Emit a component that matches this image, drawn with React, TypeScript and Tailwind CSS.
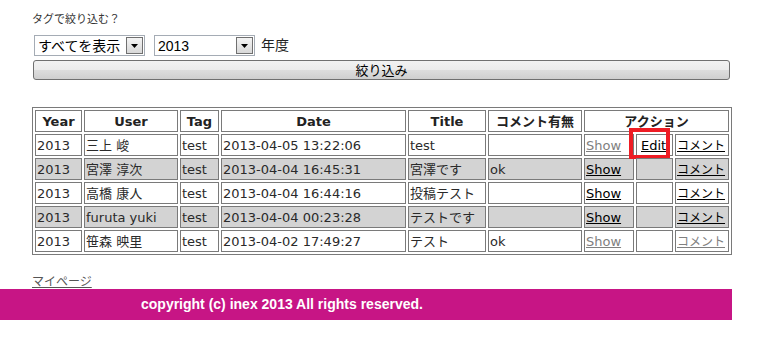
const rows = [
  { year: "2013", user: "三上 峻", tag: "test", date: "2013-04-05 13:22:06", title: "test", comment: "", showGrey: true, edit: true, cmtGrey: false },
  { year: "2013", user: "宮澤 淳次", tag: "test", date: "2013-04-04 16:45:31", title: "宮澤です", comment: "ok", showGrey: false, edit: false, cmtGrey: false },
  { year: "2013", user: "高橋 康人", tag: "test", date: "2013-04-04 16:44:16", title: "投稿テスト", comment: "", showGrey: false, edit: false, cmtGrey: false },
  { year: "2013", user: "furuta yuki", tag: "test", date: "2013-04-04 00:23:28", title: "テストです", comment: "", showGrey: false, edit: false, cmtGrey: false },
  { year: "2013", user: "笹森 映里", tag: "test", date: "2013-04-02 17:49:27", title: "テスト", comment: "ok", showGrey: true, edit: false, cmtGrey: true },
];

function FakeSelect({ value, width }: { value: string; width: string }) {
  return (
    <div className={`flex h-[21px] items-center justify-between border border-[#a5acb5] bg-white pl-[3px] pr-[1px] ${width}`}>
      <span className="text-[14px] leading-none text-black">{value}</span>
      <span className="flex h-[17px] w-[17px] items-center justify-center border border-[#707070] bg-gradient-to-b from-[#f4f4f4] to-[#d8d8d8]">
        <svg width="7" height="4" viewBox="0 0 7 4">
          <path d="M0 0h7L3.5 4z" fill="#000" />
        </svg>
      </span>
    </div>
  );
}

export default function App() {
  const cell = "h-[22px] border border-[#7a7a7a] px-[1px] align-middle whitespace-nowrap overflow-visible";
  return (
    <div className="relative min-h-[347px] w-[773px] bg-white font-['Liberation_Sans','Noto_Sans_CJK_JP',sans-serif] text-[#222]">
      <div className="ml-[32px] w-[700px] pt-[10px]">
        <p className="text-[11px] leading-[18px] text-[#333]">タグで絞り込む？</p>

        <div className="mt-[7px] flex items-center">
          <div className="ml-[2px]">
            <FakeSelect value="すべてを表示" width="w-[111px]" />
          </div>
          <div className="ml-[9px]">
            <FakeSelect value="2013" width="w-[101px]" />
          </div>
          <span className="ml-[6px] text-[14px] text-[#222]">年度</span>
        </div>

        <button
          type="button"
          className="mt-[4px] ml-[1px] flex h-[20px] w-[697px] items-center justify-center rounded-[3px] border border-[#707070] bg-[linear-gradient(to_bottom,#f2f2f2_0%,#ebebeb_50%,#dddddd_51%,#cfcfcf_100%)] text-[13px] leading-none text-black"
        >
          絞り込み
        </button>

        <table className="mt-[27px] w-[700px] table-fixed border-separate border-spacing-[2px] border border-[#7a7a7a] font-['DejaVu_Sans','Noto_Sans_CJK_JP',sans-serif] text-[13px] leading-none">
          <colgroup>
            <col className="w-[47px]" />
            <col className="w-[94px]" />
            <col className="w-[39px]" />
            <col className="w-[185px]" />
            <col className="w-[78px]" />
            <col className="w-[94px]" />
            <col className="w-[50px]" />
            <col className="w-[37px]" />
            <col className="w-[54px]" />
          </colgroup>
          <thead>
            <tr className="font-bold text-[#222]">
              <th className={`${cell} text-center`}>Year</th>
              <th className={`${cell} text-center`}>User</th>
              <th className={`${cell} text-center`}>Tag</th>
              <th className={`${cell} text-center`}>Date</th>
              <th className={`${cell} text-center`}>Title</th>
              <th className={`${cell} text-center`}>コメント有無</th>
              <th colSpan={3} className={`${cell} text-center`}>アクション</th>
            </tr>
          </thead>
          <tbody>
            {rows.map((r, i) => {
              const bg = i % 2 === 1 ? "bg-[#d3d3d3]" : "bg-white";
              return (
                <tr key={i} className="text-[#2a2a2a]">
                  <td className={`${cell} ${bg}`}>{r.year}</td>
                  <td className={`${cell} ${bg}`}>{r.user}</td>
                  <td className={`${cell} ${bg}`}>{r.tag}</td>
                  <td className={`${cell} ${bg}`}>{r.date}</td>
                  <td className={`${cell} ${bg}`}>{r.title}</td>
                  <td className={`${cell} ${bg}`}>{r.comment}</td>
                  <td className={`${cell} ${bg}`}>
                    <a href="#" className={`underline ${r.showGrey ? "text-[#808080]" : "text-black"}`}>
                      Show
                    </a>
                  </td>
                  <td className={`${cell} ${bg} relative`}>
                    {r.edit && (
                      <>
                        <a href="#" className="ml-[3px] text-black underline">
                          Edit
                        </a>
                        <span className="pointer-events-none absolute left-[-8px] top-[-7px] h-[31px] w-[41px] border-[4px] border-[#ee1c24]" />
                      </>
                    )}
                  </td>
                  <td className={`${cell} ${bg}`}>
                    <a href="#" className={`text-[12px] underline ${r.cmtGrey ? "text-[#808080]" : "text-black"}`}>
                      コメント
                    </a>
                  </td>
                </tr>
              );
            })}
          </tbody>
        </table>

        <a href="#" className="mt-[20px] block w-fit text-[12px] leading-[14px] text-[#555] underline">
          マイページ
        </a>
      </div>

      <footer className="mt-0 flex h-[31px] w-[732px] items-center bg-[#c71585] pl-[141px]">
        <span className="text-[14px] font-bold text-white">copyright (c) inex 2013 All rights reserved.</span>
      </footer>
    </div>
  );
}
